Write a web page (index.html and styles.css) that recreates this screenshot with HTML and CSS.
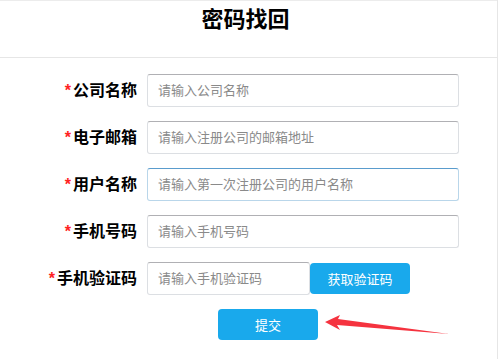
FILE: index.html
```html
<!DOCTYPE html>
<html lang="zh-CN">

<head>
    <meta charset="UTF-8">
    <meta name="viewport" content="width=device-width, initial-scale=1.0">
    <title>密码找回</title>
    <link rel="stylesheet" href="styles.css">
</head>

<body>
    <div class="page">
        <div class="head">
            <h1 class="title">密码找回</h1>
        </div>

        <form class="form">
            <label class="label"><span class="star">*</span>公司名称</label>
            <input type="text" class="field" placeholder="请输入公司名称">

            <label class="label"><span class="star">*</span>电子邮箱</label>
            <input type="text" class="field" placeholder="请输入注册公司的邮箱地址">

            <label class="label"><span class="star">*</span>用户名称</label>
            <input type="text" class="field focus" placeholder="请输入第一次注册公司的用户名称">

            <label class="label"><span class="star">*</span>手机号码</label>
            <input type="text" class="field" placeholder="请输入手机号码">

            <label class="label"><span class="star">*</span>手机验证码</label>
            <div class="code-row">
                <input type="text" class="field short" placeholder="请输入手机验证码">
                <button type="button" class="btn code-btn">获取验证码</button>
            </div>

            <div class="submit-row">
                <button type="button" class="btn submit-btn">提交</button>
            </div>
        </form>

        <!-- arrow pointing at submit -->
        <svg class="arrow" width="130" height="30" viewBox="0 0 130 30">
            <polygon points="2,14 17,7 15,11 126,26 14,17 17,22" fill="#f5333f" />
        </svg>
    </div>
</body>

</html>
```

FILE: styles.css
```css
* {
    margin: 0;
    padding: 0;
    box-sizing: border-box;
    font-family: "Liberation Sans", "Noto Sans CJK SC", sans-serif;
}

body {
    background: #fff;
}

.page {
    position: relative;
    width: 498px;
    height: 100vh;
    border-right: 1px solid #e6e6e6;
}

/* header */
.head {
    height: 58px;
    border-top: 1px solid #ececec;
    border-bottom: 1px solid #e6e6e6;
}

.title {
    font-size: 22px;
    font-weight: bold;
    text-align: center;
    color: #000;
    line-height: 30px;
    margin-top: 4px;
    padding-right: 6px;
}

/* form grid */
.form {
    display: grid;
    grid-template-columns: 137px 312px;
    column-gap: 10px;
    row-gap: 14px;
    padding-top: 16px;
    align-items: center;
}

.label {
    font-size: 16px;
    font-weight: bold;
    color: #000;
    text-align: right;
    line-height: 33px;
}

.star {
    color: #f22;
    margin-right: 2px;
}

.field {
    height: 33px;
    width: 312px;
    border: 1px solid #dcdfe3;
    border-top-color: #b0b0b4;
    border-radius: 3px;
    padding: 0 10px;
    font-size: 13px;
    color: #333;
    outline: none;
    background: #fff;
}

.field::placeholder {
    color: #8a8a8a;
}

.field.focus {
    border-color: #b9d6ea;
    border-top-color: #5a9ccd;
}

.field.short {
    width: 163px;
}

.code-row {
    display: flex;
    align-items: center;
}

.btn {
    border: none;
    border-radius: 4px;
    background: #19a9ec;
    color: #fff;
    font-size: 13px;
    cursor: pointer;
}

.code-btn {
    width: 100px;
    height: 31px;
}

.submit-row {
    grid-column: 2;
}

.submit-btn {
    width: 100px;
    height: 31px;
    margin-left: 71px;
}

.arrow {
    position: absolute;
    left: 323px;
    top: 308px;
}
```
